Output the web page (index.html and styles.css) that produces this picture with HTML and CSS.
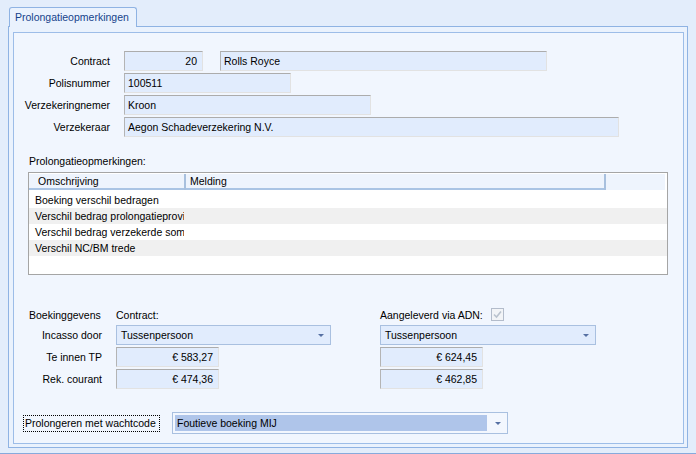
FILE: index.html
```html
<!DOCTYPE html>
<html>
<head>
<meta charset="utf-8">
<link rel="stylesheet" href="styles.css">
</head>
<body>
<div class="window">
  <div class="tabs"><div class="tab">Prolongatieopmerkingen</div></div>
  <div class="panel">
    <div class="frame">
      <div class="form">
        <div class="row">
          <div class="label">Contract</div>
          <div class="field num w79">20</div>
          <div class="field w327 gap17">Rolls Royce</div>
        </div>
        <div class="row">
          <div class="label">Polisnummer</div>
          <div class="field w167">100511</div>
        </div>
        <div class="row">
          <div class="label">Verzekeringnemer</div>
          <div class="field w247">Kroon</div>
        </div>
        <div class="row">
          <div class="label">Verzekeraar</div>
          <div class="field w495">Aegon Schadeverzekering N.V.</div>
        </div>
      </div>

      <div class="list-label">Prolongatieopmerkingen:</div>
      <div class="list">
        <div class="list-head">
          <div class="col col1">Omschrijving</div>
          <div class="sep"></div>
          <div class="col col2">Melding</div>
          <div class="sep"></div>
          <div class="col-rest"></div>
        </div>
        <div class="list-row"><div class="cell">Boeking verschil bedragen</div></div>
        <div class="list-row alt"><div class="cell">Verschil bedrag prolongatieprovisie</div></div>
        <div class="list-row"><div class="cell">Verschil bedrag verzekerde som</div></div>
        <div class="list-row alt"><div class="cell">Verschil NC/BM trede</div></div>
      </div>

      <div class="booking">
        <div class="b-title">Boekinggevens</div>
        <div class="b-head">Contract:</div>
        <div class="b-head adn">Aangeleverd via ADN:
          <span class="check"><svg width="11" height="11" viewBox="0 0 11 11"><polyline points="2,5.5 4.5,8 9,2.5" fill="none" stroke="#b9c2ce" stroke-width="1.6"/></svg></span>
        </div>

        <div class="b-label">Incasso door</div>
        <div class="combo w215"><span>Tussenpersoon</span><i class="arrow"></i></div>
        <div class="combo w216"><span>Tussenpersoon</span><i class="arrow"></i></div>

        <div class="b-label">Te innen TP</div>
        <div class="field num w103">€ 583,27</div>
        <div class="field num w103">€ 624,45</div>

        <div class="b-label">Rek. courant</div>
        <div class="field num w103">€ 474,36</div>
        <div class="field num w103">€ 462,85</div>
      </div>

      <div class="wait-row">
        <div class="focus-label">Prolongeren met wachtcode</div>
        <div class="combo2"><span class="sel">Foutieve boeking MIJ</span><i class="arrow"></i></div>
      </div>
    </div>
  </div>
  <div class="bottom-line"></div>
</div>
</body>
</html>
```

FILE: styles.css
```css
* { box-sizing: border-box; }
html, body { margin: 0; padding: 0; }
body {
  width: 696px;
  height: 454px;
  overflow: hidden;
  background: #e3edfb;
  font-family: "Liberation Sans", Arial, sans-serif;
  font-size: 10.5px;
  color: #000;
}
.window { width: 696px; height: 454px; }

.tabs { padding: 7px 0 0 9px; height: 27px; position: relative; z-index: 2; }
.tab {
  width: 128px;
  height: 20px;
  border: 1px solid #8fb3e3;
  border-bottom: none;
  border-radius: 3px 3px 0 0;
  background: #eaf2fd;
  color: #15428b;
  padding-left: 5px;
  line-height: 18px;
}

.panel {
  margin: -1px 0 0 8px;
  width: 680px;
  height: 422px;
  border: 1px solid #8fb3e3;
  background: #eaf2fd;
  padding: 5px 3px 3px 4px;
}
.frame {
  width: 671px;
  height: 412px;
  border: 1px solid #9dbde8;
  background: #f1f6fe;
  padding-top: 18px;
}

.form { display: flex; flex-direction: column; gap: 2px; }
.row { display: flex; align-items: center; height: 20px; }
.label { width: 96px; text-align: right; margin-right: 14px; }

.field {
  height: 20px;
  background: #e1ecfd;
  border: 1px solid;
  border-color: #acacac #e2e2e2 #e2e2e2 #b4b4b4;
  line-height: 18px;
  padding: 0 3px;
  white-space: nowrap;
  overflow: hidden;
}
.field.num { text-align: right; padding-right: 5px; }
.w79 { width: 79px; }
.w327 { width: 327px; }
.gap17 { margin-left: 17px; }
.w167 { width: 167px; }
.w247 { width: 247px; }
.w495 { width: 495px; }
.w103 { width: 103px; }

.list-label { margin: 17px 0 0 15px; height: 14px; line-height: 14px; }
.list {
  margin: 4px 0 0 14px;
  width: 640px;
  height: 103px;
  border: 1px solid #a5a5a5;
  background: #fff;
}
.list-head {
  display: flex;
  height: 19px;
  padding-top: 1px;
  padding-bottom: 2px;
}
.list-head > div { height: 16px; }
.col {
  background: #eef4fd;
  border-bottom: 2px solid #aac4e4;
  line-height: 14px;
  white-space: nowrap;
}
.col1 { width: 155px; padding-left: 9px; }
.col2 { width: 418px; padding-left: 4px; }
.sep { width: 2px; background: #a8c0de; }
.col-rest { width: 59px; background: #eef4fd; }

.list-row { height: 16px; line-height: 16px; }
.list-row.alt { background: #f0f0f0; }
.cell { width: 155px; padding-left: 6px; overflow: hidden; white-space: nowrap; }

.booking {
  margin: 32px 0 0 14px;
  display: grid;
  grid-template-columns: 88px 264px auto;
  grid-template-rows: 16px 20px 20px 20px;
  row-gap: 2px;
  align-items: center;
}
.booking .b-head, .booking .b-title { margin-bottom: 1px; }
.b-title { padding-left: 1px; }
.b-label { text-align: right; padding-right: 14px; }
.adn { display: flex; align-items: center; gap: 8px; }
.check {
  width: 13px;
  height: 13px;
  border: 1px solid #b3bccb;
  background: #f2f4f7;
  display: inline-flex;
  align-items: center;
  justify-content: center;
}
.check svg { display: block; }

.combo {
  height: 20px;
  background: #e1ecfd;
  border: 1px solid #a9c0e0;
  display: flex;
  align-items: center;
  justify-content: space-between;
  padding: 0 6px 0 4px;
}
.w215 { width: 215px; }
.w216 { width: 216px; }
.arrow {
  width: 0;
  height: 0;
  border-left: 3px solid transparent;
  border-right: 3px solid transparent;
  border-top: 3px solid #5670a3;
}

.wait-row {
  margin: 23px 0 0 9px;
  display: flex;
  align-items: center;
  gap: 12px;
}
.focus-label {
  width: 137px;
  height: 17px;
  border: 1px dotted #000;
  line-height: 15px;
  padding-left: 1px;
  white-space: nowrap;
}
.combo2 {
  width: 336px;
  height: 22px;
  border: 1px solid #a9c0e0;
  background: #f3f7fe;
  display: flex;
  align-items: center;
  padding: 0 6px 0 2px;
  gap: 8px;
}
.combo2 .sel {
  width: 313px;
  height: 16px;
  line-height: 16px;
  background: #afc5ea;
  padding-left: 2px;
}

.bottom-line { margin-top: 5px; height: 2px; background: #87aadc; }
```
